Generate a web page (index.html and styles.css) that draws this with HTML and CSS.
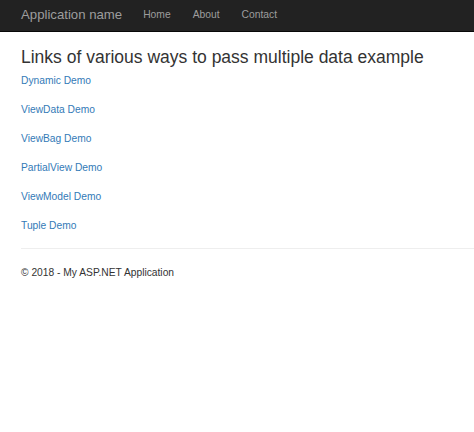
FILE: index.html
```html
<!DOCTYPE html>
<html lang="en">
<head>
<meta charset="utf-8">
<title>Application name</title>
<link rel="stylesheet" href="styles.css">
</head>
<body>
<nav class="navbar">
  <a class="brand" href="#">Application name</a>
  <ul class="nav">
    <li><a href="#">Home</a></li>
    <li><a href="#">About</a></li>
    <li><a href="#">Contact</a></li>
  </ul>
</nav>
<main class="body-content">
  <h2 class="title">Links of various ways to pass multiple data example</h2>
  <div class="links">
    <a href="#">Dynamic Demo</a>
    <a href="#">ViewData Demo</a>
    <a href="#">ViewBag Demo</a>
    <a href="#">PartialView Demo</a>
    <a href="#">ViewModel Demo</a>
    <a href="#">Tuple Demo</a>
  </div>
  <hr class="rule">
  <footer class="footer">&copy; 2018 - My ASP.NET Application</footer>
</main>
</body>
</html>
```
FILE: styles.css
```css
html, body {
  margin: 0;
  padding: 0;
  background: #fff;
  font-family: "Liberation Sans", Arial, sans-serif;
  color: #333;
}
.navbar {
  height: 29px;
  padding-bottom: 2px;
  background: #222;
  border-bottom: 1px solid #080808;
  display: flex;
  align-items: center;
  padding-left: 21px;
}
.brand {
  font-size: 13.2px;
  color: #9d9d9d;
  text-decoration: none;
  margin-right: 11px;
}
.nav {
  display: flex;
  list-style: none;
  margin: 0;
  padding: 0;
  margin-left: -1px;
}
.nav a {
  display: block;
  padding: 0 11px;
  font-size: 10.3px;
  color: #9d9d9d;
  text-decoration: none;
}
.body-content {
  padding-left: 21px;
}
.title {
  margin: 14.5px 0 0;
  font-size: 17.5px;
  line-height: 20px;
  font-weight: 400;
  color: #333;
}
.links {
  margin-top: 6.5px;
  display: flex;
  flex-direction: column;
  align-items: flex-start;
  gap: 14px;
}
.links a {
  font-size: 10.25px;
  line-height: 15px;
  color: #337ab7;
  text-decoration: none;
}
.rule {
  margin: 15px 0 0;
  border: 0;
  border-top: 1px solid #eee;
  height: 0;
}
.footer {
  margin-top: 16px;
  font-size: 10.25px;
  line-height: 15px;
  color: #333;
}
```
